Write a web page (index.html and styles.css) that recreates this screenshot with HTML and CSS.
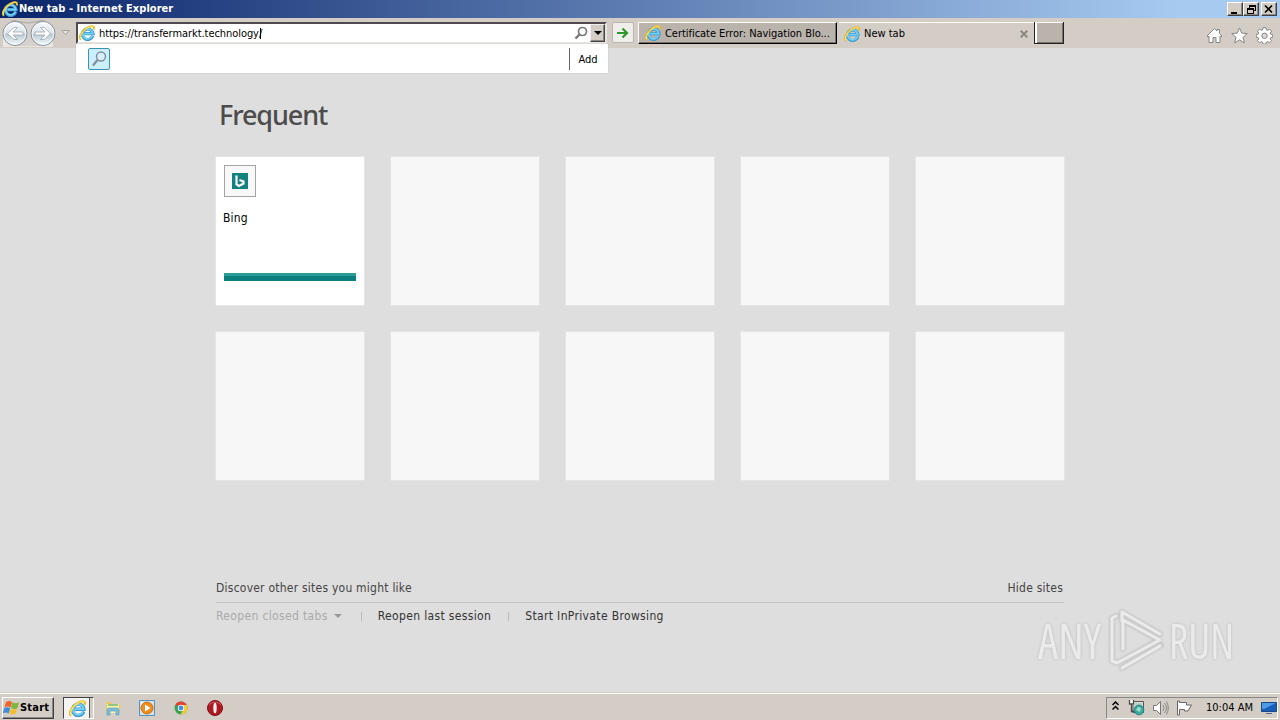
FILE: index.html
```html
<!DOCTYPE html>
<html lang="en">
<head>
  <meta charset="UTF-8">
  <title>New tab - Internet Explorer</title>
  <link rel="stylesheet" href="styles.css">
</head>
<body>
  <svg class="sprite" width="0" height="0">
    <symbol id="ie" viewBox="0 0 16 16">
      <path d="M13.8 10.8A5.3 5.3 0 1 1 14 8.700H5.400" fill="none" stroke="#3d9bd0" stroke-width="3.200"/>
      <path d="M13.400 10.600A5 5 0 1 1 13.700 8.600H5.400" fill="none" stroke="#75d1f5" stroke-width="1.700"/>
      <path d="M2 14.8C-.8 12.7 2.2 7 6.700 3.800 10.300 1.200 14.500.2 15 2.300c.2.7 0 1.400-.4 2.200" fill="none" stroke="#e8bd29" stroke-width="2"/>
      <path d="M1.700 14C.5 11.500 3 7 7 4 10.200 1.600 13.700.8 14.600 2.200" fill="none" stroke="#ffe966" stroke-width="1"/>
    </symbol>
  </svg>

  <header class="titlebar">
    <svg class="ie"><use href="#ie"/></svg>
    <h1>New tab - Internet Explorer</h1>
    <div class="window-buttons">
      <button><svg width="14" height="11"><path d="M3 8h6v2H3z"/></svg></button>
      <button><svg width="14" height="11"><path d="M5 1h7v6h-2v3H3V4h2zM6 3v1h4v2h1V3zM4 6v3h5V6z" fill-rule="evenodd"/></svg></button>
      <button class="close"><svg width="14" height="11"><path d="M3 1.5l7 7M10 1.5l-7 7" stroke="#000" stroke-width="1.7"/></svg></button>
    </div>
  </header>

  <nav class="toolbar">
    <div class="history">
      <svg width="56" height="28" viewBox="0 0 56 28">
        <defs>
          <linearGradient id="orb" x1="0" y1="0" x2="0" y2="1">
            <stop offset="0" stop-color="#fafbfc"/><stop offset=".48" stop-color="#dce3ea"/>
            <stop offset=".52" stop-color="#b9c5d0"/><stop offset="1" stop-color="#f2ffff"/>
          </linearGradient>
        </defs>
        <path d="M3 15h50v13H3z" fill="#eae7e3"/>
        <path d="M15 2Q28 6 41 2v25H15z" fill="#d6d1cc"/>
        <path d="M11 2Q15 1 20 3q8 2 16 0 5-2 9-1" fill="none" stroke="#aaa6a2"/>
        <circle cx="15" cy="14.500" r="12" fill="url(#orb)" stroke="#84909d"/>
        <circle cx="15" cy="14.500" r="10.8" fill="none" stroke="#fff" stroke-opacity=".8"/>
        <circle cx="43" cy="14.500" r="12" fill="url(#orb)" stroke="#84909d"/>
        <circle cx="43" cy="14.500" r="10.8" fill="none" stroke="#fff" stroke-opacity=".8"/>
        <path d="M7.500 14.500l6.500-6h3.500l-4.500 4.500H23v3H13l4.500 4.500H14z" fill="#fff" stroke="#9aa6b3" stroke-width=".8"/>
        <path d="M50.500 14.500L44 8.500h-3.500l4.500 4.500H35v3h10l-4.500 4.500H44z" fill="#fff" stroke="#9aa6b3" stroke-width=".8"/>
      </svg>
      <svg class="history-arrow" width="9" height="6"><path d="M.7.500h7.600L4.500 4.600z" fill="#e4dfd9" stroke="#aaa59f"/></svg>
    </div>

    <div class="address">
      <svg class="ie"><use href="#ie"/></svg>
      <span class="url">https://transfermarkt.technology/</span><i class="caret"></i>
      <svg class="search" width="14" height="14"><circle cx="8.500" cy="5.500" r="4" fill="none" stroke="#777" stroke-width="1.700"/><path d="M5.500 8.500L1.500 12.500" stroke="#777" stroke-width="2.400"/></svg>
      <button class="drop"><svg width="8" height="4"><path d="M0 0h8L4 4z"/></svg></button>
    </div>
    <button class="go"><svg width="14" height="12"><path d="M1 6h10M6.500 1.500L11 6l-4.500 4.500" fill="none" stroke="#2d9829" stroke-width="2.200"/></svg></button>

    <div class="tab inactive"><svg class="ie"><use href="#ie"/></svg><span class="cert">Certificate Error: Navigation Blo...</span></div>
    <div class="tab active">
      <svg class="ie"><use href="#ie"/></svg><span>New tab</span>
      <svg class="tab-close" width="8" height="8"><path d="M.7.700l6.600 6.600M7.300.700L.7 7.300" stroke="#8b8781" stroke-width="2"/></svg>
    </div>
    <div class="tab new-tab"></div>

    <div class="tools">
      <svg width="17" height="17" viewBox="0 0 17 17"><path d="M1 9l7.500-7.500L11 4V2.500h2.500v4L16 9l-1 1-1-.8V15.500h-4v-5H7v5H3V9.200L2 10z" fill="#fff" stroke="#858585"/></svg>
      <svg width="17" height="17" viewBox="0 0 17 17"><path d="M8.500.900l2.200 5.200 5.600.500-4.300 3.700 1.300 5.600-4.800-3-4.800 3L5 10.300.7 6.600l5.600-.500z" fill="#fff" stroke="#858585"/></svg>
      <svg width="17" height="17" viewBox="0 0 17 17"><path d="M7 .700h3l.5 2.300 1 .4 2-1.300 2 2-1.200 2 .4 1 2 .4v2.800l-2 .4-.5 1.100 1.300 2-2 2-2-1.200-1 .400-.500 2H7l-.500-2-1-.400-2 1.200-2-2 1.200-2-.400-1.100-2-.400V7.500l2-.400.400-1-1.200-2 2-2 2 1.300 1-.400z" fill="#fff" stroke="#858585"/><circle cx="8.500" cy="8.800" r="2.700" fill="#dcd7d1" stroke="#858585"/></svg>
    </div>

    <div class="suggest">
      <span class="suggest-icon"><svg width="18" height="18"><circle cx="11" cy="6.500" r="4.500" fill="#d7effa" stroke="#7f8e98" stroke-width="1.400"/><path d="M7.500 10L3 15.500" stroke="#7f8e98" stroke-width="2.200"/></svg></span>
      <button class="add">Add</button>
    </div>
  </nav>

  <main>
    <h2>Frequent</h2>
    <div class="tiles">
      <div class="tile site">
        <span class="favicon"><svg width="16" height="16"><path fill="#12817f" d="M0 0h16v16H0z"/><path d="M4.500 2.500v9L7 13l4.500-2.500v-2L7.500 7" fill="none" stroke="#fff" stroke-width="2.200"/></svg></span>
        <span class="site-name">Bing</span>
        <span class="bar"></span>
      </div>
      <div class="tile"></div>
      <div class="tile"></div>
      <div class="tile"></div>
      <div class="tile"></div>
      <div class="tile"></div>
      <div class="tile"></div>
      <div class="tile"></div>
      <div class="tile"></div>
      <div class="tile"></div>
    </div>

    <div class="discover">
      <span class="discover-text">Discover other sites you might like</span>
      <span class="hide-sites">Hide sites</span>
    </div>
    <div class="links">
      <span class="closed">Reopen closed tabs</span>
      <svg class="closed-arrow" width="8" height="4"><path d="M0 0h8L4 4z" fill="#999"/></svg>
      <i class="sep"></i>
      <span class="last-session">Reopen last session</span>
      <i class="sep"></i>
      <span class="inprivate">Start InPrivate Browsing</span>
    </div>

    <div class="watermark">
      <span class="any">ANY</span>
      <svg width="57" height="64" viewBox="0 0 57 64">
        <g fill="none" stroke-linejoin="round" stroke-linecap="round">
          <path d="M9 8L4 10v43l5 2 42-23-36-20v29M14 13V4l38 22M14 60l39-23" stroke="#cdcdcd" stroke-width="4.800"/>
          <path d="M8 8L4 10v43l5 2 43-23-37-20v29M14 13V4l38 22M14 60l38-22" stroke="#ebebeb" stroke-width="3"/>
        </g>
      </svg>
      <span class="run">RUN</span>
    </div>
  </main>

  <footer class="taskbar">
    <button class="start">
      <svg width="17" height="16" viewBox="0 0 17 16">
        <path d="M3 2q3-2 6 0L7.500 7.500q-3-2-6 0z" fill="#ee642b"/><path d="M9.500 2.300q3 2 6.500 0L14.500 8q-3 2-6.500-.300z" fill="#7cb63c"/>
        <path d="M1.200 8.200q3-2 6 0l-1.500 5.300q-3-2-6 0z" fill="#3d8fd9"/><path d="M8 8.500q3 2 6 0l-1.500 5q-3 2-6-.500z" fill="#f6bd29"/>
      </svg>
      <span>Start</span>
    </button>
    <div class="task-ie"><svg class="ie"><use href="#ie"/></svg></div>
    <div class="pinned">
      <svg width="18" height="18" viewBox="0 0 18 18"><path d="M2 3h5l1 2h8v9H2z" fill="#e9c767"/><path d="M3 5h12v9H3z" fill="#fff1a4"/><path d="M4 6h10" stroke="#6eb77b" stroke-width="1.500"/><path d="M3 16v-5q0-2 2-2h8q2 0 2 2v5h-3v-4H6v4z" fill="#78bce0" stroke="#559bc5" stroke-width=".600"/></svg>
      <svg width="18" height="18" viewBox="0 0 18 18"><path d="M1.500 1.500h15v15h-15z" fill="#cbe7fa" stroke="#5a8fbe"/><path d="M3 3h10v10H3z" fill="#fff" opacity=".6"/><circle cx="9" cy="9" r="6" fill="#f28b19" stroke="#d06d10"/><path d="M7 5.500L12.500 9 7 12.500z" fill="#fff"/></svg>
      <svg width="18" height="18" viewBox="0 0 18 18"><circle cx="9" cy="9" r="6.500" fill="#36a454"/><path d="M9 9L3.400 5.700A6.500 6.500 0 0 1 14.700 5.900H9z" fill="#df4337"/><path d="M9 6h5.700A6.500 6.500 0 0 1 8.500 15.500L12 10z" fill="#fbcb2e"/><circle cx="9" cy="9" r="3.200" fill="#fff"/><circle cx="9" cy="9" r="2.400" fill="#448be5"/></svg>
      <svg width="18" height="18" viewBox="0 0 18 18"><circle cx="9" cy="9" r="7.500" fill="#ae1821" stroke="#7e1118"/><path d="M3 6a7 6 0 0 1 12 0" fill="none" stroke="#d96168"/><ellipse cx="9" cy="9" rx="1.700" ry="5.300" fill="#f9f1f0"/></svg>
    </div>
    <div class="tray">
      <svg class="expand" width="7" height="10"><path d="M.5 4l3-3 3 3M.5 8.500l3-3 3 3" fill="none" stroke="#000" stroke-width="1.500"/></svg>
      <svg class="network" width="17" height="17"><path d="M5 2.500h10.500v11H5z" fill="#ddd" stroke="#555"/><path d="M6.500 4h7.500v7H6.500z" fill="#b4d0c9"/><path d="M1 1h5v5H1z" fill="#fff"/><path d="M1.500 1v4h4V1M3.500 5v7.500H7" fill="none" stroke="#4a4a4a" stroke-width="1.300"/><circle cx="11" cy="11" r="4.800" fill="#3eaaa3" stroke="#288380"/><path d="M8 11l2-3 3 1-1 4z" fill="#9de1c9"/></svg>
      <svg class="volume" width="17" height="16"><path d="M1.500 5.500h3l4-4v13l-4-4h-3z" fill="#fff" stroke="#777"/><path d="M11 5q2 3 0 6M12.500 3q4 5 0 10M14.500 1.500q3.500 6.500 0 13" fill="none" stroke="#888"/></svg>
      <svg class="flag" width="17" height="16"><path d="M1.500 1v14h2V9.500h5v1.500h3.500l3.500-6h-5V2.500h-7V1z" fill="#fff" stroke="#666"/></svg>
      <span class="clock">10:04 AM</span>
      <svg class="desktop" width="16" height="14"><path d="M.5 1.500h15v9H.5z" fill="#195dbb" stroke="#174887"/><path d="M1 2h14L3 8H1z" fill="#4d99e6"/><path d="M5 12h6v1H5z" fill="#506b8a"/></svg>
    </div>
  </footer>
</body>
</html>
```

FILE: styles.css
```css
* {
  margin: 0;
  padding: 0;
  box-sizing: border-box;
}

body {
  width: 1280px;
  height: 720px;
  overflow: hidden;
  display: flex;
  flex-direction: column;
  font-family: "DejaVu Sans Condensed", "DejaVu Sans", sans-serif;
  font-size: 11px;
  color: #000;
  background: #dedede;
}

svg {
  display: block;
  flex: none;
}

span {
  white-space: nowrap;
}

button {
  font: inherit;
  border: 0;
  background: #d4cdc5;
}

.sprite {
  position: absolute;
}

.ie {
  width: 16px;
  height: 16px;
}

.titlebar {
  height: 18px;
  display: flex;
  align-items: center;
  padding: 0 3px 0 2px;
  background: linear-gradient(90deg, #0a246a 0%, #a6caf0 92%);
}

.titlebar h1 {
  flex: 1;
  margin-left: 1px;
  font-size: 11px;
  line-height: 18px;
  letter-spacing: 0.05px;
  color: #fff;
}

.window-buttons {
  display: flex;
}

.window-buttons button {
  width: 16px;
  height: 14px;
  border: 1px solid;
  border-color: #fff #404040 #404040 #fff;
  box-shadow: inset -1px -1px #888;
}

.window-buttons .close {
  margin-left: 2px;
}

.toolbar {
  position: relative;
  height: 30px;
  display: flex;
  background: #d4cdc5;
}

.history {
  width: 76px;
  display: flex;
  align-items: center;
  gap: 5px;
}

.address {
  width: 531px;
  height: 22px;
  margin-top: 4px;
  padding-left: 1px;
  display: flex;
  align-items: center;
  border: 2px solid;
  border-color: #504a50 #e8e4df #e8e4df #504a50;
  background: #fff;
}

.url {
  margin-left: 4px;
  letter-spacing: -0.06px;
}

.caret {
  width: 1px;
  height: 11px;
  margin-left: -2px;
  background: #000;
}

.search {
  margin-left: auto;
}

.drop {
  width: 15px;
  height: 18px;
  margin-left: 2px;
  display: grid;
  place-items: center;
  border: 1px solid;
  border-color: #eee #444 #444 #eee;
  box-shadow: inset -1px -1px #888;
}

.go {
  width: 22px;
  height: 21px;
  margin: 4px 4px 0 5px;
  display: grid;
  place-items: center;
  border: 1px solid #bbb5b1;
  border-radius: 2px;
  background: #f0eeeb;
}

.tab {
  height: 22px;
  margin-top: 4px;
  display: flex;
  align-items: center;
}

.tab span {
  margin-left: 4px;
}

.inactive {
  width: 199px;
  padding-left: 6px;
  border: 1px solid;
  border-color: #fff #000 #000 #fff;
  box-shadow: inset -1px -1px #77716b;
  background: #bab3ab;
}

.cert {
  letter-spacing: -0.04px;
}

.active {
  width: 195px;
  margin-left: 2px;
  padding: 0 6px 0 5px;
  border-top: 1px solid #fff;
}

.tab-close {
  margin-left: auto;
}

.new-tab {
  width: 30px;
  border: solid #222;
  border-width: 0 1px 1px;
  box-shadow: inset 2px 1px #fff, inset -1px -1px #77716b;
  background: #bab3ab;
}

.tools {
  display: flex;
  align-items: center;
  gap: 8px;
  margin-left: auto;
  padding: 4px 7px 0 0;
}

/* suggestion list hangs over the page below the address bar */
.suggest {
  position: absolute;
  top: 26px;
  left: 76px;
  width: 532px;
  height: 29px;
  display: flex;
  align-items: center;
  justify-content: space-between;
  padding: 1px 1px 0 12px;
  background: #fff;
  box-shadow: 0 0 1px #aaa;
}

.suggest-icon {
  width: 22px;
  height: 22px;
  padding: 1px;
  border: 1px solid #3793b7;
  border-radius: 2px;
  background: #ccefff;
}

.add {
  width: 38px;
  height: 22px;
  padding-right: 1px;
  border-left: 1px solid #666;
  background: #fff;
}

main {
  position: relative;
  flex: 1;
  padding: 50px 216px 0;
}

h2 {
  height: 59px;
  margin-left: 3px;
  font: 500 27px/34px "Noto Sans", sans-serif;
  letter-spacing: -1.1px;
  color: #4c4c4c;
}

.tiles {
  display: grid;
  grid-template-columns: repeat(5, 148px);
  grid-auto-rows: 148px;
  gap: 27px;
}

.tile {
  background: #f7f7f7;
  box-shadow: 0 0 0 1px #e5e5e5;
}

.site {
  display: flex;
  flex-direction: column;
  padding: 8px;
  background: #fff;
}

.favicon {
  width: 32px;
  height: 32px;
  display: grid;
  place-items: center;
  border: 1px solid #a5a5a5;
  background: #f8f8f8;
}

.site-name {
  margin: 12px 0 0 -1px;
  font-size: 12px;
  line-height: 18px;
  letter-spacing: 0.2px;
}

.bar {
  height: 8px;
  margin-top: 46px;
  border-top: 3px solid #2c9d97;
  background: #0b7f7d;
}

.discover {
  height: 25px;
  margin-top: 98px;
  display: flex;
  justify-content: space-between;
  padding-right: 1px;
  border-bottom: 1px solid #c3c3c3;
  font-size: 12px;
  line-height: 20px;
  letter-spacing: 0.23px;
  color: #444;
}

.links {
  height: 26px;
  display: flex;
  align-items: center;
  font-size: 12px;
  letter-spacing: 0.35px;
  color: #333;
}

.closed {
  color: #aaa;
}

.closed-arrow {
  margin-left: 6px;
}

.sep {
  width: 1px;
  height: 9px;
  margin: 0 16px 0 19px;
  background: #bbb;
}

.last-session + .sep {
  margin-left: 17px;
}

.watermark {
  position: absolute;
  left: 1038px;
  bottom: 20px;
  display: flex;
  align-items: center;
  font: 50px/64px "Open Sans", sans-serif;
  font-stretch: 75%;
  color: #ebebeb;
  text-shadow: 0 0 3px #b5b5b5;
}

.watermark span {
  width: 62px;
  transform-origin: left;
}

.watermark .any {
  width: 70px;
  transform: scaleX(0.91);
}

.watermark .run {
  margin-left: 4px;
  transform: scaleX(0.85);
}

.watermark svg {
  filter: drop-shadow(0 0 1px #bbb);
}

.taskbar {
  height: 28px;
  display: flex;
  align-items: center;
  padding: 2px 2px 0;
  border-top: 1px solid #d4cdc5;
  box-shadow: inset 0 1px #fff;
  background: #d4cdc5;
}

.start {
  width: 52px;
  height: 22px;
  display: flex;
  align-items: center;
  border: 1px solid;
  border-color: #fff #404040 #404040 #fff;
  box-shadow: inset -1px -1px #888;
  font-weight: bold;
  letter-spacing: 0.2px;
}

.task-ie {
  width: 31px;
  height: 22px;
  margin-left: 9px;
  padding: 2px 5px;
  border: 1px solid;
  border-color: #444 #fff #fff #444;
  box-shadow: inset -3px 0 #d4cdc5, inset -4px 0 #555;
  background: #f5f3f1;
}

.task-ie .ie {
  width: 17px;
  height: 17px;
}

.pinned {
  display: flex;
  gap: 16px;
  margin-left: 10px;
}

.tray {
  width: 172px;
  height: 22px;
  margin-left: auto;
  display: flex;
  align-items: center;
  padding-left: 5px;
  border: 1px solid;
  border-color: #888 #fff #fff #888;
}

.expand {
  margin-bottom: 3px;
}

.network {
  margin-left: 9px;
}

.volume,
.flag {
  margin-left: 7px;
}

.clock {
  margin-left: 13px;
}

.desktop {
  margin-left: auto;
}
```
